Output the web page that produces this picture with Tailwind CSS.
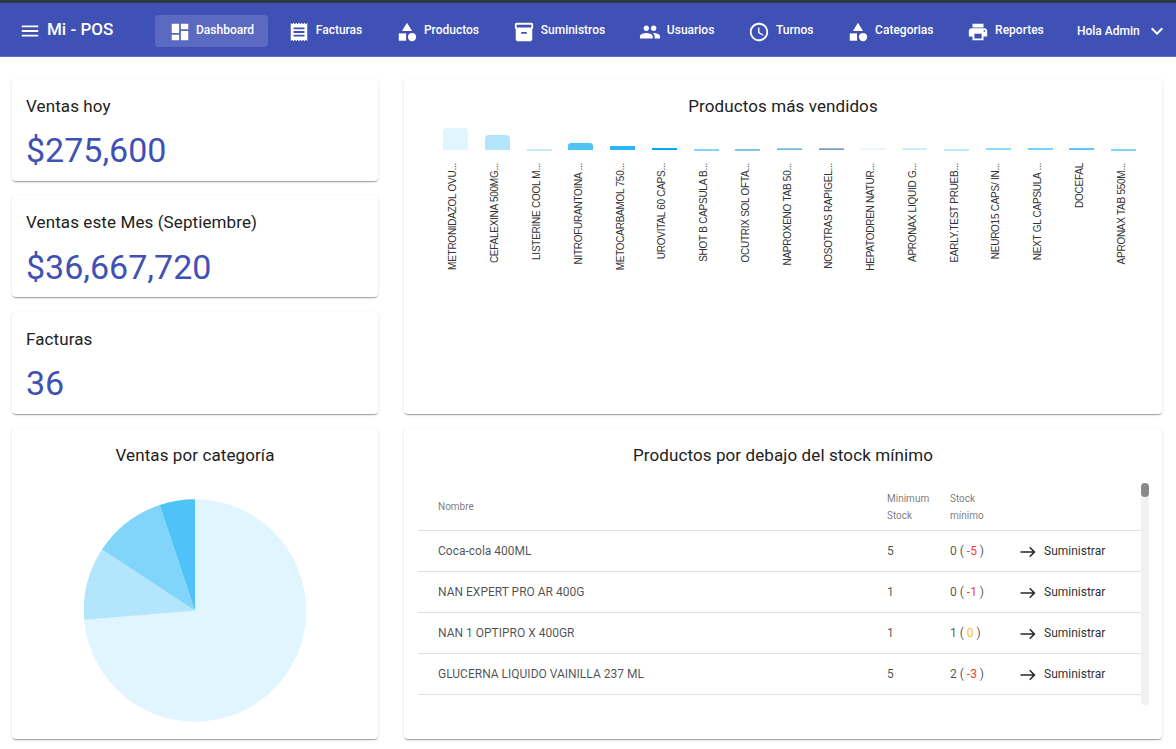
<!DOCTYPE html>
<html lang="es">
<head>
    <meta charset="UTF-8">
    <title>Mi - POS</title>
    <script src="https://cdn.jsdelivr.net/npm/@tailwindcss/browser@4"></script>
</head>
<body class="bg-white font-['Roboto',sans-serif] h-[749px] overflow-hidden">

    <!-- Top bar -->
    <div class="h-[3px] bg-[#2f3b42]"></div>
    <nav class="h-[54px] bg-[#3f51b5] border-b border-[#6272cb] flex items-center text-white pl-[19px]">
        <svg class="w-[22px] h-[22px] fill-white mt-[2px]" viewBox="0 0 24 24"><path d="M3 18h18v-2H3v2zm0-5h18v-2H3v2zm0-7v2h18V6H3z"/></svg>
        <span class="ml-[6px] w-[108px] text-[17px] font-medium mt-px">Mi - POS</span>
        <div class="flex items-center gap-[5.7px] text-xs font-medium mt-[3px]">
            <a class="h-8 px-[14px] flex items-center gap-[5px] rounded bg-white/15">
                <svg class="w-[22px] h-[22px] fill-white mt-px" viewBox="0 0 24 24"><path d="M3 13h8V3H3v10zm0 8h8v-6H3v6zm10 0h8V11h-8v10zm0-18v6h8V3h-8z"/></svg>
                <span class="mb-[2px]">Dashboard</span>
            </a>
            <a class="h-8 px-[14px] flex items-center gap-[6px]">
                <svg class="w-[22px] h-[22px] fill-white mt-px" viewBox="0 0 24 24"><path d="M18 17H6v-2h12v2zm0-4H6v-2h12v2zm0-4H6V7h12v2zM3 22l1.5-1.5L6 22l1.5-1.5L9 22l1.5-1.5L12 22l1.5-1.5L15 22l1.5-1.5L18 22l1.5-1.5L21 22V2l-1.5 1.5L18 2l-1.5 1.5L15 2l-1.5 1.5L12 2l-1.5 1.5L9 2 7.5 3.5 6 2 4.5 3.5 3 2v20z"/></svg>
                <span class="mb-[2px]">Facturas</span>
            </a>
            <a class="h-8 px-[14px] flex items-center gap-[6px]">
                <svg class="w-[22px] h-[22px] fill-white mt-px" viewBox="0 0 24 24"><path d="M12 2l-5.5 9h11z"/><circle cx="17.5" cy="17.5" r="4.5"/><path d="M3 13.5h8v8H3z"/></svg>
                <span class="mb-[2px]">Productos</span>
            </a>
            <a class="h-8 px-[14px] flex items-center gap-[6px]">
                <svg class="w-[22px] h-[22px] fill-white mt-px" viewBox="0 0 24 24"><path d="M20 2H4c-1 0-2 .9-2 2v3.01c0 .72.43 1.34 1 1.69V20c0 1.1 1.1 2 2 2h14c.9 0 2-.9 2-2V8.7c.57-.35 1-.97 1-1.69V4c0-1.1-1-2-2-2zm-5 12H9v-2h6v2zm5-7H4V4l16-.02V7z"/></svg>
                <span class="mb-[2px]">Suministros</span>
            </a>
            <a class="h-8 px-[14px] flex items-center gap-[6px]">
                <svg class="w-[22px] h-[22px] fill-white mt-px" viewBox="0 0 24 24"><path d="M16 11c1.66 0 2.99-1.34 2.99-3S17.66 5 16 5c-1.66 0-3 1.34-3 3s1.34 3 3 3zm-8 0c1.66 0 2.99-1.34 2.99-3S9.66 5 8 5C6.34 5 5 6.34 5 8s1.34 3 3 3zm0 2c-2.33 0-7 1.17-7 3.5V19h14v-2.5c0-2.33-4.67-3.5-7-3.5zm8 0c-.29 0-.62.02-.97.05 1.16.84 1.97 1.97 1.97 3.45V19h6v-2.5c0-2.33-4.67-3.5-7-3.5z"/></svg>
                <span class="mb-[2px]">Usuarios</span>
            </a>
            <a class="h-8 px-[14px] flex items-center gap-[6px]">
                <svg class="w-[22px] h-[22px] fill-white mt-px" viewBox="0 0 24 24"><path d="M11.99 2C6.47 2 2 6.48 2 12s4.47 10 9.99 10C17.52 22 22 17.52 22 12S17.52 2 11.99 2zM12 20c-4.42 0-8-3.58-8-8s3.58-8 8-8 8 3.58 8 8-3.58 8-8 8zm.5-13H11v6l5.25 3.15.75-1.23-4.5-2.67z"/></svg>
                <span class="mb-[2px]">Turnos</span>
            </a>
            <a class="h-8 px-[14px] flex items-center gap-[6px]">
                <svg class="w-[22px] h-[22px] fill-white mt-px" viewBox="0 0 24 24"><path d="M12 2l-5.5 9h11z"/><circle cx="17.5" cy="17.5" r="4.5"/><path d="M3 13.5h8v8H3z"/></svg>
                <span class="mb-[2px]">Categorias</span>
            </a>
            <a class="h-8 px-[14px] flex items-center gap-[6px]">
                <svg class="w-[22px] h-[22px] fill-white mt-px" viewBox="0 0 24 24"><path d="M19 8H5c-1.66 0-3 1.34-3 3v6h4v4h12v-4h4v-6c0-1.66-1.34-3-3-3zm-3 11H8v-5h8v5zm3-7c-.55 0-1-.45-1-1s.45-1 1-1 1 .45 1 1-.45 1-1 1zm-1-9H6v4h12V3z"/></svg>
                <span class="mb-[2px]">Reportes</span>
            </a>
            <a class="h-8 ml-[13.5px] flex items-center gap-[5px]">
                Hola Admin
                <svg class="w-6 h-6 fill-white" viewBox="0 0 24 24"><path d="M16.59 8.59L12 13.17 7.41 8.59 6 10l6 6 6-6z"/></svg>
            </a>
        </div>
    </nav>

    <!-- Dashboard -->
    <main class="grid grid-cols-[366px_758px] grid-rows-[335px_311px] gap-x-[26px] gap-y-[14px] pl-3 pt-[22px]">
        <div class="flex flex-col gap-[14px]">
            <div class="h-[102px] bg-white rounded shadow-[0_2px_1px_-1px_rgba(0,0,0,.2),0_1px_1px_0_rgba(0,0,0,.14),0_1px_3px_0_rgba(0,0,0,.12)] px-[14px] pt-[17px]">
                <h2 class="text-[17px] font-[450] tracking-[.1px] leading-5 text-[#212121]">Ventas hoy</h2>
                <p class="mt-[14px] text-[34px] leading-[40px] text-[#3f51b5]">$275,600</p>
            </div>
            <div class="h-[102px] bg-white rounded shadow-[0_2px_1px_-1px_rgba(0,0,0,.2),0_1px_1px_0_rgba(0,0,0,.14),0_1px_3px_0_rgba(0,0,0,.12)] px-[14px] pt-[17px]">
                <h2 class="text-[17px] font-[450] tracking-[.1px] leading-5 text-[#212121]">Ventas este Mes (Septiembre)</h2>
                <p class="mt-[15px] text-[34px] leading-[40px] text-[#3f51b5]">$36,667,720</p>
            </div>
            <div class="h-[102px] mt-px bg-white rounded shadow-[0_2px_1px_-1px_rgba(0,0,0,.2),0_1px_1px_0_rgba(0,0,0,.14),0_1px_3px_0_rgba(0,0,0,.12)] px-[14px] pt-[17px]">
                <h2 class="text-[17px] font-[450] tracking-[.1px] leading-5 text-[#212121]">Facturas</h2>
                <p class="mt-[14px] text-[34px] leading-[40px] text-[#3f51b5]">36</p>
            </div>
        </div>

        <!-- Bar chart -->
        <div class="bg-white rounded shadow-[0_2px_1px_-1px_rgba(0,0,0,.2),0_1px_1px_0_rgba(0,0,0,.14),0_1px_3px_0_rgba(0,0,0,.12)] pt-[17px]">
            <h2 class="text-[17px] font-[450] tracking-[.1px] leading-5 text-[#212121] text-center">Productos más vendidos</h2>
            <div class="mt-[12px] ml-[30.6px] grid grid-cols-[repeat(17,41.78px)] font-['Liberation_Sans',sans-serif] text-[10px] tracking-[-0.26px] text-[#333]">
                <div class="flex flex-col items-center"><div class="h-[22px] flex items-end"><div class="w-[25px] h-[22px] rounded-t-[4px] bg-[#e1f5fe]"></div></div><span class="mt-[13px] -ml-[4px] leading-none [writing-mode:vertical-rl] rotate-180 whitespace-nowrap">METRONIDAZOL OVU...</span></div>
                <div class="flex flex-col items-center"><div class="h-[22px] flex items-end"><div class="w-[25px] h-[15px] rounded-t-[4px] bg-[#b3e5fc]"></div></div><span class="mt-[13px] -ml-[4px] leading-none [writing-mode:vertical-rl] rotate-180 whitespace-nowrap">CEFALEXINA 500MG...</span></div>
                <div class="flex flex-col items-center"><div class="h-[22px] flex items-end"><div class="w-[25px] h-[2px] -mb-px bg-[#c5eafb]"></div></div><span class="mt-[13px] -ml-[4px] leading-none [writing-mode:vertical-rl] rotate-180 whitespace-nowrap">LISTERINE COOL M...</span></div>
                <div class="flex flex-col items-center"><div class="h-[22px] flex items-end"><div class="w-[25px] h-[7px] rounded-t-[3px] bg-[#4fc3f7]"></div></div><span class="mt-[13px] -ml-[4px] leading-none [writing-mode:vertical-rl] rotate-180 whitespace-nowrap">NITROFURANTOINA ...</span></div>
                <div class="flex flex-col items-center"><div class="h-[22px] flex items-end"><div class="w-[25px] h-[4px] rounded-t-[1px] bg-[#29b6f6]"></div></div><span class="mt-[13px] -ml-[4px] leading-none [writing-mode:vertical-rl] rotate-180 whitespace-nowrap">METOCARBAMOL 750...</span></div>
                <div class="flex flex-col items-center"><div class="h-[22px] flex items-end"><div class="w-[25px] h-[2px] bg-[#03a9f4]"></div></div><span class="mt-[13px] -ml-[4px] leading-none [writing-mode:vertical-rl] rotate-180 whitespace-nowrap">UROVITAL 60 CAPS...</span></div>
                <div class="flex flex-col items-center"><div class="h-[22px] flex items-end"><div class="w-[25px] h-[2px] -mb-px bg-[#81d4fa]"></div></div><span class="mt-[13px] -ml-[4px] leading-none [writing-mode:vertical-rl] rotate-180 whitespace-nowrap">SHOT B CAPSULA B...</span></div>
                <div class="flex flex-col items-center"><div class="h-[22px] flex items-end"><div class="w-[25px] h-[2px] -mb-px bg-[#81c5e8]"></div></div><span class="mt-[13px] -ml-[4px] leading-none [writing-mode:vertical-rl] rotate-180 whitespace-nowrap">OCUTRIX SOL OFTA...</span></div>
                <div class="flex flex-col items-center"><div class="h-[22px] flex items-end"><div class="w-[25px] h-[2px] bg-gradient-to-b from-[#b5d8ec] to-[#5ba7d8]"></div></div><span class="mt-[13px] -ml-[4px] leading-none [writing-mode:vertical-rl] rotate-180 whitespace-nowrap">NAPROXENO TAB 50...</span></div>
                <div class="flex flex-col items-center"><div class="h-[22px] flex items-end"><div class="w-[25px] h-[2px] bg-gradient-to-b from-[#b4c8dc] to-[#5f8fbc]"></div></div><span class="mt-[13px] -ml-[4px] leading-none [writing-mode:vertical-rl] rotate-180 whitespace-nowrap">NOSOTRAS RAPIGEL...</span></div>
                <div class="flex flex-col items-center"><div class="h-[22px] flex items-end"><div class="w-[25px] h-[2px] bg-[#e8f7fe]"></div></div><span class="mt-[13px] -ml-[4px] leading-none [writing-mode:vertical-rl] rotate-180 whitespace-nowrap">HEPATODREN NATUR...</span></div>
                <div class="flex flex-col items-center"><div class="h-[22px] flex items-end"><div class="w-[25px] h-[2px] bg-[#c9eefd]"></div></div><span class="mt-[13px] -ml-[4px] leading-none [writing-mode:vertical-rl] rotate-180 whitespace-nowrap">APRONAX LIQUID G...</span></div>
                <div class="flex flex-col items-center"><div class="h-[22px] flex items-end"><div class="w-[25px] h-[2px] -mb-px bg-[#b9e9fc]"></div></div><span class="mt-[13px] -ml-[4px] leading-none [writing-mode:vertical-rl] rotate-180 whitespace-nowrap">EARLY.TEST PRUEB...</span></div>
                <div class="flex flex-col items-center"><div class="h-[22px] flex items-end"><div class="w-[25px] h-[2px] bg-[#8fdafb]"></div></div><span class="mt-[13px] -ml-[4px] leading-none [writing-mode:vertical-rl] rotate-180 whitespace-nowrap">NEURO15 CAPS/ IN...</span></div>
                <div class="flex flex-col items-center"><div class="h-[22px] flex items-end"><div class="w-[25px] h-[2px] bg-[#73d3fb]"></div></div><span class="mt-[13px] -ml-[4px] leading-none [writing-mode:vertical-rl] rotate-180 whitespace-nowrap">NEXT GL CAPSULA ...</span></div>
                <div class="flex flex-col items-center"><div class="h-[22px] flex items-end"><div class="w-[25px] h-[2px] bg-[#5cc9fb]"></div></div><span class="mt-[13px] -ml-[4px] leading-none [writing-mode:vertical-rl] rotate-180 whitespace-nowrap">DOCEFAL</span></div>
                <div class="flex flex-col items-center"><div class="h-[22px] flex items-end"><div class="w-[25px] h-[2px] -mb-px bg-[#81d4fa]"></div></div><span class="mt-[13px] -ml-[4px] leading-none [writing-mode:vertical-rl] rotate-180 whitespace-nowrap">APRONAX TAB 550M...</span></div>
            </div>
        </div>

        <!-- Pie chart -->
        <div class="bg-white rounded shadow-[0_2px_1px_-1px_rgba(0,0,0,.2),0_1px_1px_0_rgba(0,0,0,.14),0_1px_3px_0_rgba(0,0,0,.12)] pt-[17px]">
            <h2 class="text-[17px] font-[450] tracking-[.1px] leading-5 text-[#212121] text-center">Ventas por categoría</h2>
            <svg class="mt-[34px] ml-[72px]" width="223" height="223" viewBox="-111 -111.5 223 223">
                <circle r="111.2" fill="#e1f5fe"/>
                <path d="M0 0L-110.8 9.3A111.2 111.2 0 0 1-92.9 -61Z" fill="#b3e5fc"/>
                <path d="M0 0L-92.9 -61A111.2 111.2 0 0 1-35.2 -105.5Z" fill="#81d4fa"/>
                <path d="M0 0L-35.2 -105.5A111.2 111.2 0 0 1 0 -111.2Z" fill="#4fc3f7"/>
            </svg>
        </div>

        <!-- Stock table -->
        <div class="bg-white rounded shadow-[0_2px_1px_-1px_rgba(0,0,0,.2),0_1px_1px_0_rgba(0,0,0,.14),0_1px_3px_0_rgba(0,0,0,.12)] pt-[17px] pl-[14px]">
            <h2 class="text-[17px] font-[450] tracking-[.1px] leading-5 text-[#212121] text-center pr-[14px]">Productos por debajo del stock mínimo</h2>
            <div class="mt-[18px] flex h-[222px]">
                <div class="w-[723px] text-xs text-black/70">
                    <div class="h-[48px] border-b border-[#e0e0e0] grid grid-cols-[449px_63px_69px_auto] items-center pl-5 text-[10px] leading-[17px] text-black/55">
                        <span>Nombre</span>
                        <span>Minimum<br>Stock</span>
                        <span>Stock<br>mínimo</span>
                    </div>
                    <div class="h-[41px] border-b border-[#e0e0e0] grid grid-cols-[449px_63px_69px_auto] items-center pl-5">
                        <span>Coca-cola 400ML</span>
                        <span>5</span>
                        <span>0 ( <span class="text-[#f44336]">-5</span> )</span>
                        <a class="flex items-center gap-[7px] text-black/85"><svg class="w-[18px] h-[18px] fill-black/85 mt-[2px]" viewBox="0 0 24 24"><path d="M15 5l-1.41 1.41L18.17 11H2V13h16.17l-4.58 4.59L15 19l7-7-7-7z"/></svg><span>Suministrar</span></a>
                    </div>
                    <div class="h-[41px] border-b border-[#e0e0e0] grid grid-cols-[449px_63px_69px_auto] items-center pl-5">
                        <span>NAN EXPERT PRO AR 400G</span>
                        <span>1</span>
                        <span>0 ( <span class="text-[#f44336]">-1</span> )</span>
                        <a class="flex items-center gap-[7px] text-black/85"><svg class="w-[18px] h-[18px] fill-black/85 mt-[2px]" viewBox="0 0 24 24"><path d="M15 5l-1.41 1.41L18.17 11H2V13h16.17l-4.58 4.59L15 19l7-7-7-7z"/></svg><span>Suministrar</span></a>
                    </div>
                    <div class="h-[41px] border-b border-[#e0e0e0] grid grid-cols-[449px_63px_69px_auto] items-center pl-5">
                        <span>NAN 1 OPTIPRO X 400GR</span>
                        <span>1</span>
                        <span>1 ( <span class="text-[#ffc107]">0</span> )</span>
                        <a class="flex items-center gap-[7px] text-black/85"><svg class="w-[18px] h-[18px] fill-black/85 mt-[2px]" viewBox="0 0 24 24"><path d="M15 5l-1.41 1.41L18.17 11H2V13h16.17l-4.58 4.59L15 19l7-7-7-7z"/></svg><span>Suministrar</span></a>
                    </div>
                    <div class="h-[41px] border-b border-[#e0e0e0] grid grid-cols-[449px_63px_69px_auto] items-center pl-5">
                        <span>GLUCERNA LIQUIDO VAINILLA 237 ML</span>
                        <span>5</span>
                        <span>2 ( <span class="text-[#f44336]">-3</span> )</span>
                        <a class="flex items-center gap-[7px] text-black/85"><svg class="w-[18px] h-[18px] fill-black/85 mt-[2px]" viewBox="0 0 24 24"><path d="M15 5l-1.41 1.41L18.17 11H2V13h16.17l-4.58 4.59L15 19l7-7-7-7z"/></svg><span>Suministrar</span></a>
                    </div>
                </div>
                <div class="w-2 h-full rounded bg-[#f1f1f1]">
                    <div class="w-2 h-[14px] rounded bg-[#8a8a8a]"></div>
                </div>
            </div>
        </div>
    </main>
</body>
</html>
